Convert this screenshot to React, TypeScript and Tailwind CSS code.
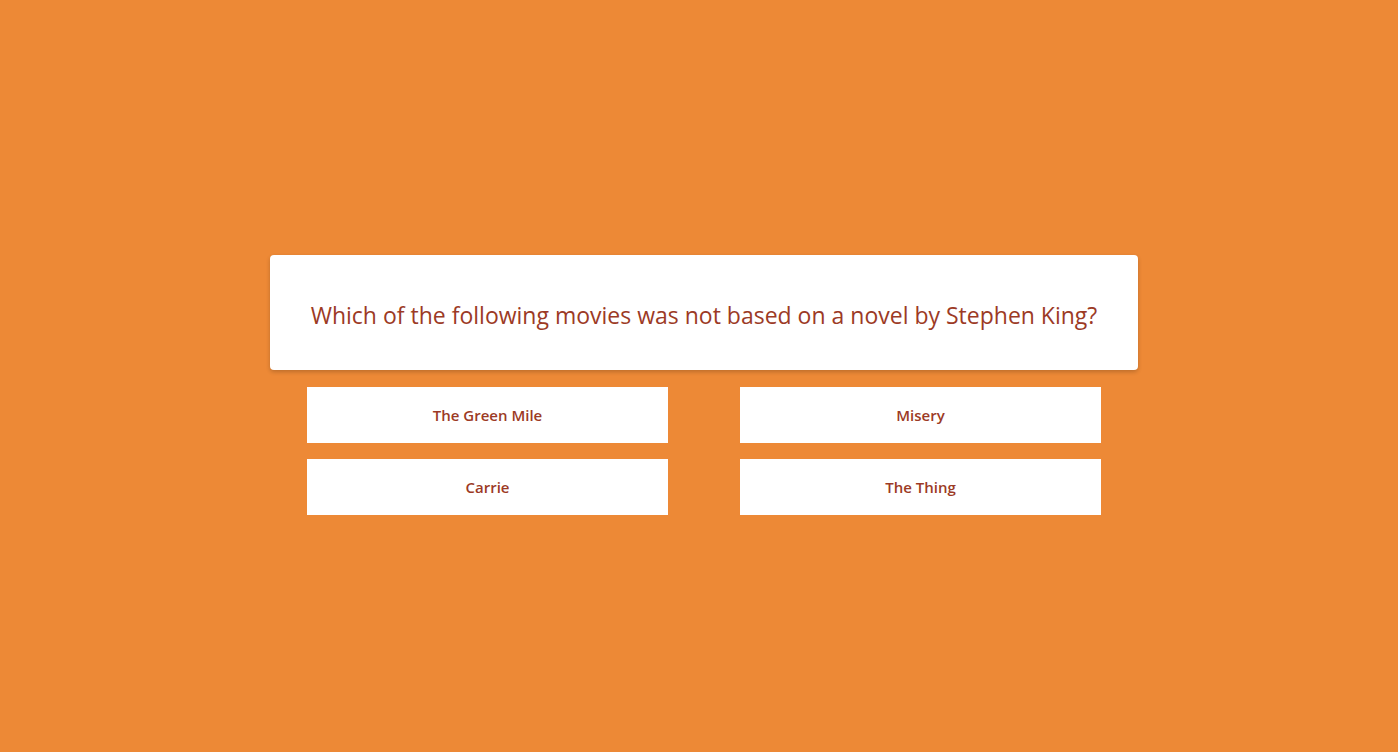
import React from "react";

const answers = ["The Green Mile", "Misery", "Carrie", "The Thing"];

export default function App() {
	return (
		<div
			className="w-full h-[752px] bg-[#ed8936] flex flex-col items-center pt-[255px] pl-[10px]"
			style={{ fontFamily: '"Open Sans", "Noto Sans", sans-serif' }}
		>
			<div className="w-[868px] h-[115px] bg-white rounded shadow-[0_2px_4px_rgba(0,0,0,0.2)] flex items-center justify-center pt-[5px]">
				<h1 className="text-[23px] text-[#9c3a25]">
					Which of the following movies was not based on a novel by Stephen King?
				</h1>
			</div>
			<div className="grid grid-cols-2 gap-x-[72px] gap-y-4 mt-[17px] w-[794px]">
				{answers.map((a) => (
					<button
						key={a}
						className="h-14 bg-white text-[#9c3a25] text-[15px] font-semibold flex items-center justify-center"
					>
						{a}
					</button>
				))}
			</div>
		</div>
	);
}
